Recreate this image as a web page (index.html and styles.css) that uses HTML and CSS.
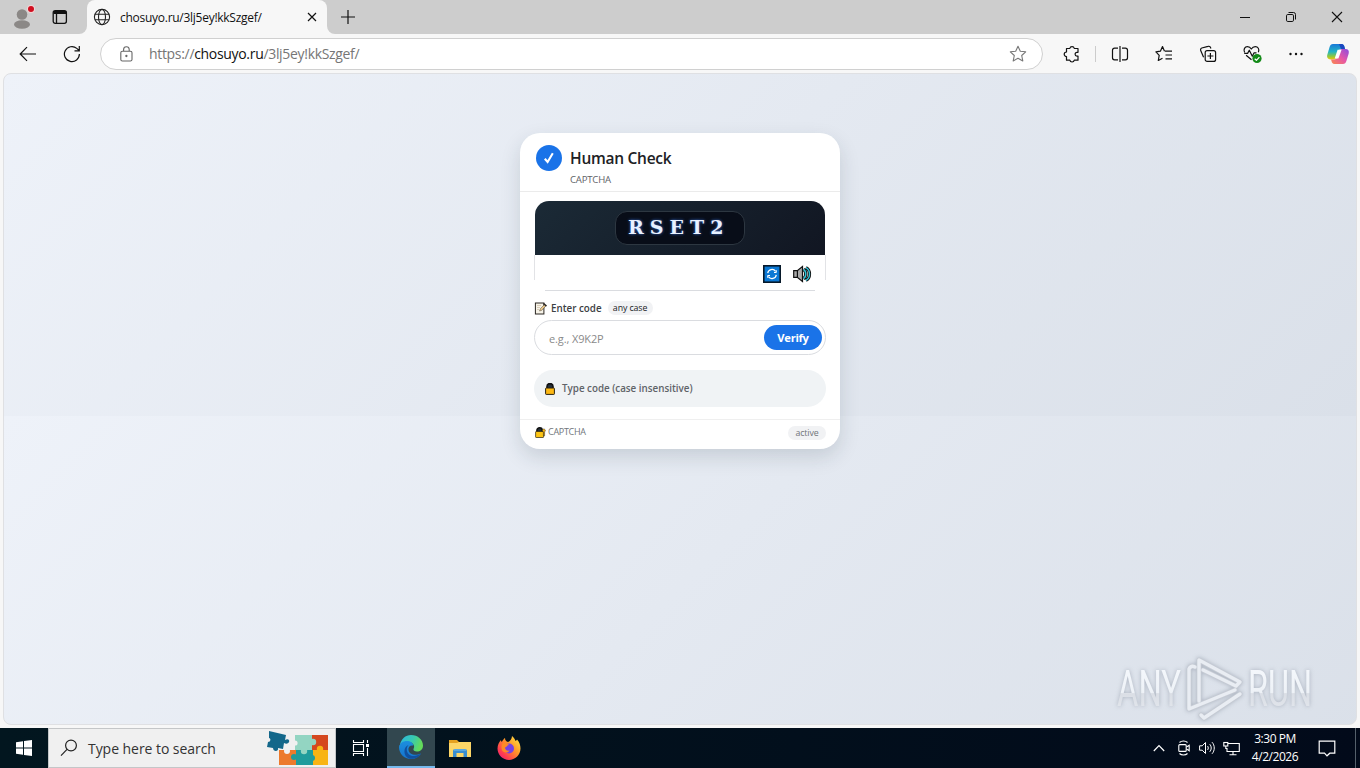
FILE: index.html
```html
<!DOCTYPE html>
<html lang="en">
<head>
    <meta charset="UTF-8">
    <meta name="viewport" content="width=device-width, initial-scale=1.0">
    <title>Human Check</title>
    <link rel="stylesheet" href="styles.css">
</head>
<body>
    <!-- Tab strip -->
    <div class="titlebar">
        <div class="tab-left">
            <svg class="avatar" width="26" height="26" viewBox="0 0 26 26">
                <circle cx="13" cy="9.5" r="5.3" fill="#8b8886"/>
                <ellipse cx="13" cy="19.5" rx="8" ry="4.2" fill="#8b8886"/>
                <circle cx="22" cy="4" r="4" fill="#f3d5d5"/>
                <circle cx="22" cy="4" r="3" fill="#d00f20"/>
            </svg>
            <svg class="tabs-icon" width="16" height="16" viewBox="0 0 16 16" fill="none" stroke="#111" stroke-width="1.3">
                <rect x="1.2" y="1.7" width="13.2" height="12.6" rx="2"/>
                <path d="M1.5 3.5h12.7" stroke-width="3"/>
                <path d="M4.5 4v10"/>
            </svg>
        </div>
        <div class="tab">
            <svg width="18" height="18" viewBox="0 0 18 18" fill="none" stroke="#222" stroke-width="1.1">
                <circle cx="9" cy="9" r="7.6"/>
                <ellipse cx="9" cy="9" rx="3.5" ry="7.6"/>
                <path d="M2 6.3h14M2 11.7h14"/>
            </svg>
            <span class="tab-title">chosuyo.ru/3lj5ey!kkSzgef/</span>
            <svg class="tab-close" width="10" height="10" viewBox="0 0 10 10" stroke="#111" stroke-width="1.2">
                <path d="M1 1l8 8M9 1l-8 8"/>
            </svg>
        </div>
        <div class="tab-right">
            <svg width="14" height="14" viewBox="0 0 14 14" stroke="#111" stroke-width="1.2">
                <path d="M7 0v14M0 7h14"/>
            </svg>
        </div>
        <div class="window-buttons">
            <span><svg width="12" height="12" viewBox="0 0 12 12" stroke="#111"><path d="M1 6.5h10"/></svg></span>
            <span><svg width="12" height="12" viewBox="0 0 12 12" fill="none" stroke="#111"><rect x="1.5" y="3.5" width="7" height="7" rx="1.3"/><path d="M3.5 1.5h5a2 2 0 0 1 2 2v5"/></svg></span>
            <span><svg width="12" height="12" viewBox="0 0 12 12" stroke="#111" stroke-width="1.1"><path d="M1 1l10 10M11 1L1 11"/></svg></span>
        </div>
    </div>

    <!-- Toolbar -->
    <div class="toolbar">
        <span class="nav-btn back"><svg width="18" height="16" viewBox="0 0 18 16" fill="none" stroke="#111" stroke-width="1.2"><path d="M17 8H1.5M8 1.2L1.2 8 8 14.8"/></svg></span>
        <span class="nav-btn"><svg width="18" height="18" viewBox="0 0 18 18" fill="none" stroke="#111" stroke-width="1.2"><path d="M16.4 9A7.5 7.5 0 1 1 13.8 3.4L16.2 5.6M16.3 1v4.8h-4.8"/></svg></span>
        <div class="address">
            <svg width="14" height="16" viewBox="0 0 14 16" fill="none" stroke="#666" stroke-width="1.1">
                <rect x=".8" y="5.2" width="11.2" height="9.8" rx="1.6"/>
                <path d="M3.600 5V3.600a2.800 2.800 0 0 1 5.600 0V5"/>
                <circle cx="6.400" cy="10" r=".6" fill="#555"/>
            </svg>
            <span class="url">https://<b>chosuyo.ru</b>/3lj5ey!kkSzgef/</span>
            <svg class="star" width="18" height="18" viewBox="0 0 18 18" fill="none" stroke="#777" stroke-width="1.1" stroke-linejoin="round">
                <path d="M9 1.2l2.3 5 5.4.6-4 3.7 1.1 5.4L9 13.2l-4.8 2.7 1.1-5.4-4-3.7 5.4-.6z"/>
            </svg>
        </div>
        <span class="ext">
            <svg width="18" height="18" viewBox="0 0 18 18" fill="none" stroke="#111" stroke-width="1.2" stroke-linejoin="round">
                <path d="M3.5 3.5H6.8a2.3 2.3 0 0 1 4.5 0H15V7.3h-1a1.9 1.9 0 0 0 0 3.8h1V15.2H11.3a2.3 2.3 0 0 1-4.5 0H3.5V11.6a2.3 2.3 0 0 1 0-4.6z"/>
            </svg>
        </span>
        <span class="divider"></span>
        <span class="tool"><svg width="18" height="18" viewBox="0 0 18 18" fill="none" stroke="#111" stroke-width="1.2"><path d="M7 3.2H3.500a2 2 0 0 0-2 2v7.600a2 2 0 0 0 2 2H7M11 3.200h3.500a2 2 0 0 1 2 2v7.600a2 2 0 0 1-2 2H11M9 1v16"/></svg></span>
        <span class="tool"><svg width="18" height="18" viewBox="0 0 18 18" fill="none" stroke="#111" stroke-width="1.2" stroke-linejoin="round"><path d="M9.500 6.200L7.500 1.600 5.400 6.200.9 6.800l3.300 3.500-.9 5.200 4.200-2.300M10 6.200h7M10.500 10h6.500M10.500 13.800h6.500"/></svg></span>
        <span class="tool"><svg width="18" height="18" viewBox="0 0 18 18" fill="none" stroke="#111" stroke-width="1.2"><rect x="6.2" y="5.6" width="10.4" height="10.8" rx="2"/><path d="M11.4 8v6M8.4 11h6M4.600 12.300L1.700 5.400A1.800 1.800 0 0 1 2.800 3L9 1.400a2 2 0 0 1 2.700 1.400l.2.7"/></svg></span>
        <span class="tool">
            <svg width="20" height="20" viewBox="0 0 20 20" fill="none" stroke="#111" stroke-width="1.2" stroke-linejoin="round">
                <path d="M2.600 8.400C1 5.400 3 2.600 5.400 2.600c1.800 0 3 .8 3.900 2.400 1-1.600 2.200-2.400 4-2.400 2.600 0 4.400 2.600 3.100 5.600M2.200 9.400h3.400l1.700-3.200 3 6 1.800-3.400h2.400M4.100 11.200l5.400 4.600"/>
                <circle cx="15" cy="14.500" r="4.600" fill="#138a18" stroke="none"/>
                <path d="M12.700 14.700l1.700 1.600 3-3.200" stroke="#fff"/>
            </svg>
        </span>
        <span class="tool"><svg width="16" height="4" viewBox="0 0 16 4" fill="#111"><circle cx="2.500" cy="2" r="1.2"/><circle cx="8" cy="2" r="1.2"/><circle cx="13.500" cy="2" r="1.2"/></svg></span>
        <span class="copilot">
            <svg width="24" height="22" viewBox="0 0 24 22">
                <defs>
                    <linearGradient id="cpA" x1="0" y1="0" x2="0" y2="1"><stop offset="0" stop-color="#1877d8"/><stop offset=".5" stop-color="#22b5c4"/><stop offset=".8" stop-color="#8fc93c"/><stop offset="1" stop-color="#f2c40f"/></linearGradient>
                    <linearGradient id="cpB" x1="1" y1="0" x2="0" y2="1"><stop offset="0" stop-color="#8a4de0"/><stop offset=".5" stop-color="#e656a8"/><stop offset="1" stop-color="#fa8a4c"/></linearGradient>
                </defs>
                <path d="M7 1h8.500c2 0 2.600 1.400 3 3l.5 2h-3.500c-2 0-2.700 1-3.200 2.700L10.800 14c-.6 1.600-1.300 2.500-3 2.500H4.500C1.800 16.500.6 14.300 1.300 11.800L3.600 4C4.200 2 5.200 1 7 1z" fill="url(#cpA)"/>
                <path d="M13 1h2.500c2 0 2.600 1.400 3 3l.5 2h-4z" fill="#1b48c0"/>
                <path d="M17 21H8.500c-2 0-2.600-1.400-3-3L5 16.500h3c2 0 2.700-1 3.200-2.700L13 8.500C13.600 6.700 14.300 6 16 6h3.500c2.700 0 3.900 2 3.200 4.500L20.400 18c-.6 2-1.600 3-3.400 3z" fill="url(#cpB)"/>
                <path d="M11.600 6.800h4l-3.200 8.700H8.700z" fill="#fff"/>
            </svg>
        </span>
    </div>

    <!-- Page -->
    <div class="page">
        <div class="card">
            <div class="card-header">
                <span class="badge"><svg width="12" height="12" viewBox="0 0 12 12" fill="none" stroke="#fff" stroke-width="2.100"><path d="M1.800 6.800l2.800 3.200L9.800 1.200"/></svg></span>
                <div>
                    <div class="card-title">Human Check</div>
                    <div class="card-sub">CAPTCHA</div>
                </div>
            </div>
            <div class="captcha">
                <div class="captcha-screen"><span class="captcha-code">RSET2</span></div>
                <div class="captcha-tools">
                    <svg width="18" height="18" viewBox="0 0 18 18" fill="none">
                        <rect x=".8" y=".8" width="16.400" height="16.400" fill="#0b78d4" stroke="#07192a" stroke-width="1.600"/>
                        <path d="M4.700 8.200A4.400 4.400 0 0 1 12.600 6.300M13.300 9.800A4.400 4.400 0 0 1 5.400 11.700" stroke="#fff" stroke-width="1.200"/>
                        <path d="M13.300 5.200v2.300h-2.300M4.700 12.800v-2.300H7" stroke="#fff"/>
                    </svg>
                    <svg width="20" height="18" viewBox="0 0 20 18" stroke="#111" stroke-width="1.200">
                        <path d="M11.500 4.500c3 1.500 3 7.500 0 9M13.900 2.600c4.800 2.500 4.800 10.300 0 12.800" fill="none" stroke="#111" stroke-width="3.200"/>
                        <path d="M11.500 4.500c3 1.500 3 7.500 0 9M13.900 2.600c4.800 2.500 4.800 10.300 0 12.800" fill="none" stroke="#31c3d8" stroke-width="1.400"/>
                        <path d="M1.700 5.700h3.600l5.200-4.200v15l-5.200-4.200H1.700z" fill="#aaa"/>
                        <path d="M5.400 5.700v6.600"/>
                    </svg>
                </div>
            </div>
            <div class="field-label">
                <svg width="13" height="13" viewBox="0 0 13 13" fill="none" stroke="#2b2622">
                    <rect x="1.400" y="1" width="8.500" height="11" fill="#f7f3e8"/>
                    <path d="M3 3.500h4M3 5.500h3M3 7.500h2" stroke="#d9cdb8"/>
                    <path d="M5.500 9l1-2.500L10.500 2.500l1.500 1.300L7.800 8.300z" fill="#ecc98a" stroke-width=".4"/>
                    <path d="M9.500 1.500l3 2.600" stroke-width="1.600"/>
                </svg>
                <span class="label-text">Enter code</span>
                <span class="pill any-case">any case</span>
            </div>
            <div class="code-input">
                <span class="placeholder">e.g., X9K2P</span>
                <span class="verify">Verify</span>
            </div>
            <div class="status">
                <svg width="10" height="12" viewBox="0 0 10 12">
                    <path d="M2 5V3.600a3 3 0 0 1 6 0V5" fill="#24303a" stroke="#111" stroke-width="1.600"/>
                    <rect x=".6" y="5" width="8.800" height="6.400" rx=".6" fill="#fdb813" stroke="#2a2212"/>
                </svg>
                <span class="status-text">Type code (case insensitive)</span>
            </div>
            <div class="card-footer">
                <svg width="11" height="11" viewBox="0 0 11 11">
                    <path d="M1.900 5V3.500a2.700 2.700 0 0 1 5.400 0V5" fill="#24303a" stroke="#111" stroke-width="1.500"/>
                    <rect x=".6" y="4.500" width="8" height="6" rx=".6" fill="#fdc513" stroke="#2a2212" stroke-width=".7"/>
                    <path d="M7.300 3.400a1.500 1.500 0 1 1 2.300 1.400v4H8.400V5z" fill="#fdb813" stroke="#2a2212" stroke-width=".5"/>
                </svg>
                <span class="footer-text">CAPTCHA</span>
                <span class="pill active">active</span>
            </div>
        </div>
        <!-- Watermark lies over the page -->
        <svg class="watermark" width="210" height="70" viewBox="0 0 210 70">
            <defs>
                <linearGradient id="wm" x1="0" y1="0" x2="0" y2="1"><stop offset="0" stop-color="#f6f9fd"/><stop offset=".56" stop-color="#eef2f7"/><stop offset=".58" stop-color="#dadee5"/><stop offset="1" stop-color="#e6eaf0"/></linearGradient>
            </defs>
            <g fill="url(#wm)">
                <text x="5" y="52" textLength="64" lengthAdjust="spacingAndGlyphs">ANY</text>
                <text x="136" y="52" textLength="64" lengthAdjust="spacingAndGlyphs">RUN</text>
            </g>
            <g fill="none" stroke-linecap="round" stroke-linejoin="round">
                <path d="M83 13Q79 11 77 15V55L123 36M87 47V6L128 28L124 32L91 16M87 6V47M89 61L92 64L128 40" stroke="#c6cbd4" stroke-width="5"/>
                <path d="M83 13Q79 11 77 15V55L123 36M87 47V6L128 28L124 32L91 16M87 6V47M89 61L92 64L128 40" stroke="#e9edf3" stroke-width="3.400"/>
            </g>
        </svg>
    </div>

    <!-- Taskbar -->
    <div class="taskbar">
        <span class="start"><svg width="16" height="16" viewBox="0 0 16 16" fill="#fff"><path d="M0 2.200l7-1V7.500H0zM8 1l8-1v7.500H8zM0 8.500h7v6.300l-7-1zM8 8.500h8V16l-8-1.100z"/></svg></span>
        <div class="search">
            <svg width="18" height="18" viewBox="0 0 18 18" fill="none" stroke="#222" stroke-width="1.200"><circle cx="11" cy="6.500" r="5.400"/><path d="M7 10.400L1 16.600"/></svg>
            <span class="search-text">Type here to search</span>
            <svg class="puzzle" width="64" height="36" viewBox="0 0 64 36">
                <path d="M13 20h17v15H13z" fill="#ec7a2c"/>
                <path d="M29 5h17v15H29z" fill="#93d5c2"/>
                <path d="M46 5h16v15H46z" fill="#d5481f"/>
                <path d="M30 20h17v15H30z" fill="#1e9c9c"/>
                <path d="M47 20h15v15H47z" fill="#f8b414"/>
                <circle cx="38" cy="21" r="3.200" fill="#93d5c2"/>
                <circle cx="47" cy="12" r="3.200" fill="#93d5c2"/>
                <circle cx="54" cy="19" r="3.200" fill="#f8b414"/>
                <circle cx="28" cy="27" r="3" fill="#1e9c9c"/>
                <circle cx="46" cy="28" r="3" fill="#1e9c9c"/>
                <circle cx="21" cy="21" r="3" fill="#f0f0f0"/>
                <circle cx="29" cy="13" r="2.600" fill="#f0f0f0"/>
                <path d="M3 1l17 4-1 5c3-2 5 0 4 2s-3 2-5 1l-1 6-5-1c1 4-5 4-5 0l-6-1 1-5c3 0 3-4 1-4z" fill="#13678a"/>
            </svg>
        </div>
        <span class="app task-view"><svg width="18" height="18" viewBox="0 0 18 18" fill="none" stroke="#fff" stroke-width="1.100"><path d="M1.500 1v2.500h10V1M1.500 17v-2.500h10V17M1.500 5.500h10v7h-10zM15.500 1v3M15.500 9v8"/><path d="M14 5h3v3h-3z" fill="#fff" stroke="none"/></svg></span>
        <span class="app current">
            <svg width="24" height="24" viewBox="0 0 24 24">
                <defs>
                    <linearGradient id="edA" x1="0" y1="0" x2="1" y2=".3"><stop offset="0" stop-color="#2bb5e6"/><stop offset=".6" stop-color="#38c9b0"/><stop offset="1" stop-color="#63db5b"/></linearGradient>
                    <linearGradient id="edB" x1="0" y1="0" x2="0" y2="1"><stop offset="0" stop-color="#1c8fde"/><stop offset="1" stop-color="#1673cd"/></linearGradient>
                </defs>
                <path d="M1 10C2 4 6.500 0 12 0c7 0 12 5 12 10.500 0 4-3 6-6 6-2.500 0-4-1-3.500-2.500C17 10 12 6 7 7 4 7.500 2 9 0 12z" fill="url(#edA)"/>
                <path d="M0 12c1-4 4-6 8-6 3.500 0 6 2 6.300 4.500C11 10 9 12 9.500 15c.6 4 6 6.500 12.500 3.500C20 22 16.500 24 12 24 5 24 0 18.500 0 12z" fill="url(#edB)"/>
                <path d="M9.500 10c-2 2-2.500 6 0 9 3 3 8 2.500 12.500-.5-3 5-8.500 6-12 5C4 21 4 12 9.500 10z" fill="#10509f"/>
            </svg>
        </span>
        <span class="app">
            <svg width="22" height="19" viewBox="0 0 22 19">
                <path d="M0 1h8l2 2h12v3H0z" fill="#e5a220"/>
                <path d="M0 4h8l2-1h12v15H0z" fill="#fcd667"/>
                <path d="M4 18v-6a2 2 0 0 1 2-2h10a2 2 0 0 1 2 2v6h-3.500v-4h-7v4z" fill="#398ed0"/>
                <path d="M5 11h12" stroke="#7cc2ee"/>
            </svg>
        </span>
        <span class="app">
            <svg width="24" height="24" viewBox="0 0 24 24">
                <defs><linearGradient id="ffA" x1="1" y1="0" x2="0" y2="1"><stop offset="0" stop-color="#fff04a"/><stop offset=".4" stop-color="#ff9a28"/><stop offset=".75" stop-color="#ff3b50"/><stop offset="1" stop-color="#e31587"/></linearGradient></defs>
                <path d="M15 0c2 1.500 3 3.500 3.500 5 1.300-.5 1.500-1.500 1.500-1.500 2.500 2.500 3.500 6 3.500 9C23.500 19 18 24 12 24S.5 19 .5 12.500C.5 9 2 6 4 4c0 1 .3 1.500.8 2C6 4 7 2.500 8 2c0 2 1 3.500 3 4 2-.8 4-3 4-6z" fill="url(#ffA)"/>
                <circle cx="12" cy="12.500" r="5" fill="#7542e5"/>
                <path d="M6 7c3-1 5 .5 6 2-2 0-2 2-4 2.500 0 2.500 2 3.500 4.500 3-1 2-4 3-6.500 1-2-2-2-6 0-8.500z" fill="#ff8a26"/>
            </svg>
        </span>
        <div class="tray">
            <svg class="chevron" width="12" height="8" viewBox="0 0 12 8" fill="none" stroke="#fff" stroke-width="1.200"><path d="M.8 7L6 1.500 11.200 7"/></svg>
            <svg class="cam" width="12" height="16" viewBox="0 0 12 16" fill="none" stroke="#fff" stroke-width="1.100"><rect x=".8" y="4.600" width="7.400" height="6.800" rx="1"/><path d="M8.500 7l2.700-1.700v5.400L8.500 9M1.500 2.500c2-2 6-2 8 0M1.500 13.500c2 2 6 2 8 0"/></svg>
            <svg class="vol" width="17" height="14" viewBox="0 0 17 14" fill="none" stroke="#fff"><path d="M.6 4.800h2.600L6.500 1.500v11L3.200 9.200H.6zM8.500 5c1 1 1 3 0 4M10.700 3.200c2 2 2 5.600 0 7.600M13 1.200c3 3 3 8.600 0 11.600"/></svg>
            <svg class="net" width="17" height="15" viewBox="0 0 17 15" fill="none" stroke="#fff" stroke-width="1.100"><path d="M5 2.500h11.300v8H4V7M10 10.500v3M6.500 13.700h7"/><rect x=".8" y="1.500" width="4" height="3.500"/><path d="M2.800 5v2.500H4"/></svg>
            <div class="clock"><span class="time">3:30 PM</span><span class="date">4/2/2026</span></div>
            <svg class="note" width="18" height="17" viewBox="0 0 18 17" fill="none" stroke="#fff" stroke-width="1.200"><path d="M1.200 1.200h15.600v12h-5L9 15.800l-2.500-2.600H1.200z"/></svg>
            <span class="peek"></span>
        </div>
    </div>
</body>
</html>
```
FILE: styles.css
```css
* {
    box-sizing: border-box;
}

body {
    margin: 0;
    width: 1360px;
    height: 768px;
    overflow: hidden;
    display: flex;
    flex-direction: column;
    background: #f7f7f7;
    font-family: 'Open Sans', 'Noto Sans', sans-serif;
    color: #222;
}

svg {
    display: block;
    flex: none;
}

span {
    white-space: nowrap;
}

/* Tab strip */
.titlebar {
    display: flex;
    height: 34px;
    flex: none;
    background: #f7f7f7;
}

.tab-left {
    width: 87px;
    display: flex;
    align-items: center;
    padding-left: 9px;
    background: #cdcdcd;
    border-bottom-right-radius: 8px;
}

.avatar {
    margin-top: 2px;
}

.tabs-icon {
    margin-left: 17px;
}

/* grey behind the rounded top corners */
.tab {
    width: 240px;
    display: flex;
    align-items: center;
    padding: 0 10px 0 6px;
    border-radius: 8px 8px 0 0;
    background: #f7f7f7;
    box-shadow: 0 -8px 0 8px #cdcdcd;
    clip-path: inset(0);
}

.tab-title {
    margin-left: 9px;
    font-size: 12px;
    letter-spacing: -0.27px;
    color: #111;
}

.tab-close {
    margin-left: auto;
}

.tab-right {
    flex: 1;
    display: flex;
    align-items: center;
    padding-left: 14px;
    background: #cdcdcd;
    border-bottom-left-radius: 8px;
}

.window-buttons {
    display: flex;
    background: #cdcdcd;
}

.window-buttons span {
    width: 46px;
    display: flex;
    align-items: center;
    justify-content: center;
}

/* Toolbar */
.toolbar {
    display: flex;
    align-items: center;
    height: 39px;
    flex: none;
}

.nav-btn {
    width: 44px;
    display: flex;
    justify-content: center;
}

.back {
    margin-left: 6px;
}

.address {
    width: 943px;
    height: 32px;
    margin-left: 6px;
    padding: 0 15px 0 19px;
    display: flex;
    align-items: center;
    background: #fff;
    border: 1px solid #d0d0d0;
    border-radius: 16px;
}

.url {
    margin-left: 15px;
    font-size: 14px;
    letter-spacing: -0.32px;
    color: #767676;
}

.url b {
    font-weight: 400;
    color: #111;
}

.star {
    margin-left: auto;
}

.ext {
    width: 52px;
    display: flex;
    padding-left: 20px;
}

.divider {
    width: 1px;
    height: 16px;
    margin-right: 2px;
    background: #ccc;
}

.tool {
    width: 44px;
    display: flex;
    justify-content: center;
}

.copilot {
    margin-left: 8px;
}

/* Page */
.page {
    position: relative;
    height: 652px;
    flex: none;
    margin: 0 3px;
    padding-top: 59px;
    border: 1px solid #dfe0e3;
    border-radius: 8px;
    background: linear-gradient(135deg, #eef2f9 0%, #dae0e9 100%) left top / 100% 342px;
}

.card {
    width: 320px;
    height: 316px;
    margin: 0 auto;
    border-radius: 20px;
    background: #fff;
    box-shadow: 0 8px 20px rgba(30, 45, 60, 0.15);
}

.card-header {
    height: 59px;
    display: flex;
    padding: 12px 16px 0;
    border-bottom: 1px solid #ebebeb;
}

.badge {
    width: 26px;
    height: 26px;
    margin-right: 8px;
    display: flex;
    align-items: center;
    justify-content: center;
    border-radius: 50%;
    background: #1a73e8;
}

.card-title {
    height: 26px;
    line-height: 27px;
    font-size: 15.5px;
    font-weight: 600;
    letter-spacing: -0.27px;
    color: #202124;
}

.card-sub {
    margin-top: 2px;
    line-height: 14px;
    font-size: 9.6px;
    letter-spacing: -0.2px;
    color: #5f6368;
}

.captcha {
    margin: 9px 14px 0;
}

.captcha-screen {
    height: 54px;
    margin: 0 1px;
    display: flex;
    align-items: center;
    justify-content: center;
    border-radius: 14px 14px 0 0;
    background: linear-gradient(135deg, #1b2a36, #111622);
}

.captcha-code {
    width: 130px;
    height: 34px;
    padding-left: 12px;
    border: 1px solid #2d3741;
    border-radius: 12px;
    background: #080d18;
    font: bold 19px/30px 'DejaVu Serif', serif;
    letter-spacing: 6px;
    color: #e8f1ff;
    text-shadow: 0 0 3px #3b72d9;
}

/* side rules stop short of the bottom one */
.captcha-tools {
    height: 36px;
    display: flex;
    align-items: center;
    justify-content: flex-end;
    gap: 11px;
    padding: 1px 14px 0 0;
    background:
        linear-gradient(#e2e3e6, #e2e3e6) left top / 1px 25px no-repeat,
        linear-gradient(#e2e3e6, #e2e3e6) right top / 1px 25px no-repeat,
        linear-gradient(#dadce0, #dadce0) center bottom / 270px 1px no-repeat;
}

.field-label {
    height: 14px;
    margin: 10px 14px 0;
    display: flex;
    align-items: center;
}

.label-text {
    margin-left: 4px;
    font-size: 9.8px;
    font-weight: 600;
    color: #3c4043;
}

.pill {
    height: 14px;
    line-height: 14px;
    text-align: center;
    border-radius: 8px;
    background: #f1f2f4;
}

.any-case {
    width: 45px;
    margin-left: 6px;
    font-size: 8.8px;
    letter-spacing: -0.1px;
    color: #202124;
}

.code-input {
    height: 35px;
    margin: 5px 14px 0;
    padding: 0 3px 0 14px;
    display: flex;
    align-items: center;
    justify-content: space-between;
    border: 1px solid #dadce0;
    border-radius: 18px;
}

.placeholder {
    padding-top: 2px;
    font-size: 11px;
    letter-spacing: -0.12px;
    color: #8a8a8a;
}

.verify {
    width: 58px;
    height: 25px;
    line-height: 25px;
    text-align: center;
    border-radius: 13px;
    background: #1a73e8;
    color: #fff;
    font-size: 11.2px;
    font-weight: 700;
    letter-spacing: -0.3px;
}

.status {
    height: 37px;
    margin: 15px 14px 0;
    padding-left: 11px;
    display: flex;
    align-items: center;
    border-radius: 19px;
    background: #f0f3f5;
}

.status-text {
    margin-left: 7px;
    font-size: 9.8px;
    font-weight: 600;
    color: #5f6368;
}

.card-footer {
    height: 26px;
    margin-top: 12px;
    padding: 0 14px 0 15px;
    display: flex;
    align-items: center;
    border-top: 1px solid #efefef;
}

.footer-text {
    margin-left: 2px;
    font-size: 9px;
    letter-spacing: -0.28px;
    line-height: 12px;
    padding-bottom: 1px;
    color: #70757a;
}

.active {
    width: 38px;
    margin-left: auto;
    font-size: 8.8px;
    letter-spacing: -0.1px;
    color: #70757a;
}

.watermark {
    position: absolute;
    right: 34px;
    bottom: 0;
    font: 400 50px Roboto, sans-serif;
    filter: drop-shadow(0 0 2px rgba(120, 130, 145, 0.5));
}

/* Taskbar */
.taskbar {
    height: 40px;
    flex: none;
    margin-top: 3px;
    display: flex;
    background: linear-gradient(90deg, #02161f, #020a1a);
}

.start {
    width: 48px;
    display: flex;
    align-items: center;
    justify-content: center;
}

.search {
    width: 288px;
    display: flex;
    align-items: center;
    padding-left: 11px;
    background: #f0f0f0;
    border: 1px solid #c4c6c8;
}

.search-text {
    margin-left: 10px;
    font-size: 14px;
    letter-spacing: -0.05px;
    color: #333;
}

.puzzle {
    margin: 0 5px 0 auto;
}

.app {
    width: 49px;
    display: flex;
    align-items: center;
    justify-content: center;
}

.task-view {
    width: 51px;
    padding-right: 2px;
}

.current {
    width: 48px;
    background: #32474f;
    border-bottom: 2px solid #76b9ed;
}

.tray {
    flex: 1;
    display: flex;
    align-items: center;
    justify-content: flex-end;
    color: #fff;
}

.cam {
    margin-left: 13px;
}

.vol {
    margin-left: 9px;
}

.net {
    margin-left: 7px;
}

.clock {
    width: 70px;
    display: flex;
    flex-direction: column;
    align-items: center;
    line-height: 18px;
    font-size: 12px;
    margin-right: 8px;
}

.time,
.date {
    letter-spacing: -0.45px;
}

.note {
    margin-right: 19px;
}

.peek {
    width: 5px;
    height: 40px;
    border-left: 1px solid #55606b;
}
```
